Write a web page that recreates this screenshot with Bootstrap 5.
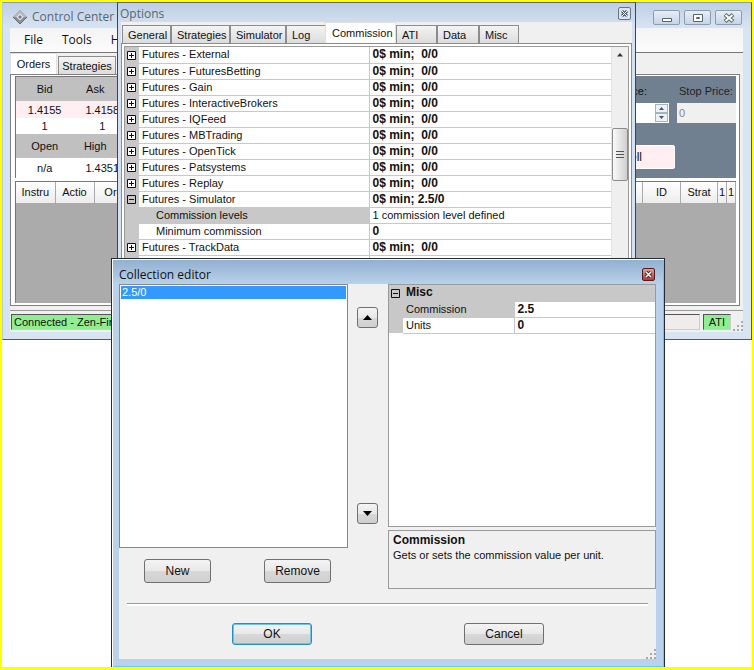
<!DOCTYPE html>
<html lang="en">
<head>
<meta charset="utf-8">
<meta name="viewport" content="width=device-width, initial-scale=1">
<title>Control Center</title>
<link href="https://cdn.jsdelivr.net/npm/bootstrap@5.3.0/dist/css/bootstrap.min.css" rel="stylesheet">
<style>
body{font:11px/16px "Liberation Sans",Arial,sans-serif;color:#111;background:#fff}
button,input{font:inherit;color:inherit}
.desktop{min-height:100vh;border:2px solid #ff0;border-bottom-width:3px}
.win{background:#d7e4f2}
.win-title{font:12px/20px "Open Sans","Noto Sans",sans-serif}
.client{background:#f0f0f0}

/* window placement on the desktop */
.w-main{top:0;left:0;right:0;border:1px solid #4a5a6c;border-left-color:#b9cbe0;border-top-color:#8a9db2}
.w-opt{top:0;left:115px;right:116px;height:300px;border:1px solid #444;border-top-color:#667;background:#d3e1f0}
.w-edit{top:256px;left:109px;right:87px;border:1px solid #222c36;background:#b9d1ea;box-shadow:inset 1px 1px #fff,inset -1px -1px #62cfe8}

/* main window */
.w-main .win-title{height:25px;padding:4px 9px 0 9px;color:#5a6674;background:linear-gradient(#bfd0e4,#d7e4f2)}
.w-main .client{margin:0 8px 7px 7px}
.cap{width:27px;height:15px;border:1px solid #8e9cae;border-radius:2px;background:linear-gradient(#e6eef7,#c6d5e6)}
.caps{padding-top:3px}
.menu{height:25px;background:linear-gradient(#f4f4f4,#fbfbfb);border-bottom:1px solid #777;padding:0 14px;gap:19px}
.menu a{font:12px/23px "Open Sans","Noto Sans",sans-serif;color:#111}
.tabs{border:0;gap:1px}
.tabs .nav-link{border:1px solid #8c8c8c;border-bottom:0;border-radius:0;color:#111;padding:1px 0 0 5px;height:18px;line-height:16px;text-align:left;background:linear-gradient(#f4f4f4,#dcdcdc);margin:0}
.tabs .nav-link.active{background:#fff;color:#111;height:21px;line-height:17px}
.tabs.m .nav-link{text-align:center;padding:1px 0 0}
.t47{width:47px}.t58{width:58px}.t49{width:49px}.t59{width:59px}.t56{width:56px}.t40{width:40px}.t71{width:71px}.t41{width:41px}.t42{width:42px}
.pane{border:1px solid #808080;background:#fff;margin:0 3px 0 0;padding:1px 3px 2px 4px}
.quotes{width:174px;table-layout:fixed;border-left:1px solid #777;border-top:1px solid #777}
.quotes th,.quotes td{text-align:center;padding:0;font-weight:400}
.quotes th{height:24px;background:#c0c0c0}
.quotes th:nth-child(2){padding-right:14px}
.quotes td{height:16px}
.quotes .pink td{background:#ffeef2;padding-top:1px}
.quotes .tall td{height:20px}
.entry{background:#708090;padding-top:5px}
.entry label{line-height:20px;display:block;padding-bottom:2px}
.entry input{border:0;height:20px;padding:0 2px;border-radius:0;min-width:0}
.f-lim{width:86px}.f-lim label{text-align:right;padding-right:22px}
.f-stop{width:59px;color:#222}
.f-stop label{padding-left:2px}
.f-stop input{background:#f0f0f0;color:#888}
.spin{width:14px;padding:1px 1px 1px 0;background:#fff}
.spin button{border:1px solid #a5b3c5;background:#eef1f6;width:13px;height:9px;padding:0;line-height:0}
.sell{width:86px;height:24px;border:1px solid #fff;border-radius:2px;background:#ffeef2;margin:22px 61px 0 0;font-size:12px}
.orders{border-top:1px solid #777;border-left:1px solid #777;margin-top:3px;background:#ababab;height:122px}
.orders table{width:100%;table-layout:fixed}
.orders th{height:21px;font-weight:400;text-align:center;padding:0;background:linear-gradient(#fff,#ececec);border-right:1px solid #aaa;white-space:nowrap;overflow:hidden}
.status{margin-top:4px;border-top:1px solid #999;padding:3px 0 1px 1px;height:22px}
.status span{height:16px;line-height:15px;border:1px solid #555;border-right-color:#ccc;border-bottom-color:#ccc;white-space:nowrap}
.green{background:#90ee90}
.conn{width:320px;padding-left:2px}.idle{background:#f0ecec;margin-right:3px}.ati{width:28px;text-align:center;margin-right:2px}

/* options window */
.w-opt .win-title{height:19px;padding:2px 4px 0 2px;line-height:18px;color:#5a6674;background:linear-gradient(#bdcfe3,#cfdeed)}
.xbtn{width:13px;height:13px;border:1px solid #66748a;border-radius:2px;background:#dbe5f1;padding:0;line-height:0;margin-top:2px}
.w-opt .client{margin:0 3px;height:278px}
.w-opt .tabs{padding-left:1px;gap:0}
.w-opt .tabs .nav-link.active{margin-left:-1px;padding-left:6px}
.o-pane{border:1px solid #8c8c8c;background:#fff;padding:2px}
.pg{width:100%;table-layout:fixed;background:#fff}
.pg th,.pg td{height:16px;line-height:15px;padding:0 0 0 3px;border-bottom:1px solid #c8c8c8;font-weight:400;white-space:nowrap;overflow:hidden}
.pg th{border-right:1px solid #c8c8c8}
.pg td{font-weight:700;font-size:12px}
.pg td.n{font-weight:400;font-size:11px}
.pg .g{background:#c8c8c8;border:0;padding:0 0 0 2px;line-height:0;overflow:visible}
.pg .sub{padding-left:17px}
.pg .on{background:#c8c8c8}
.exp{border:0;background:none;padding:0;line-height:0;display:block}
.frame{border:1px solid #9a9a9a;border-bottom:0}
.sb{width:17px;background:#efefef;border-left:1px solid #e4e4e4}
.thumb{height:53px;margin-top:65px;border:1px solid #8b8b8b;border-radius:2px;background:linear-gradient(90deg,#fafafa,#cfcfcf)}

/* collection editor */
.w-edit .win-title{height:24px;margin:1px 1px 0;padding:5px 8px 0 6px;line-height:20px;color:#111;background:linear-gradient(#92b0d1,#b9d1ea)}
.xred{background:linear-gradient(#dba0a0,#a83c3c);border-color:#5c1a1a;margin-top:3px}
.w-edit .client{margin:0 8px 8px 7px}
.listbox{width:229px;border:1px solid #828790;border-radius:0;height:264px;background:#fff;padding:1px}
.listbox .list-group-item{border:0;border-radius:0;padding:0 1px;line-height:13px;text-align:left}
.listbox .active{background:#39f;color:#fff}
.movers{width:40px;height:264px;padding:23px 1px 24px 0}
.wbtn{border:1px solid #707070;border-radius:3px;background:linear-gradient(#f4f4f4,#e8e8e8 50%,#d8d8d8 51%,#cfcfcf);padding:0;height:24px;color:#111;line-height:20px;font-size:12px}
.wbtn:hover{color:#111}
.sq{width:21px;height:21px;line-height:0}
.b67{width:67px}.b80{width:80px;height:22px}
.def{border-color:#2a8dbb;box-shadow:inset 0 0 0 1px #6cc5e8}
.props{border:1px solid #9a9a9a;background:#fff;height:243px}
.hint{border:1px solid #9a9a9a;margin-top:3px;height:59px;padding:2px 4px;line-height:15px}
.hint b{font-size:12px}
.rule{border-top:1px solid #999;border-bottom:2px solid #fff;margin:14px 8px 0}
.left-b{padding:11px 17px 0 25px}
.foot{padding:17px 112px 0 113px}
</style>
</head>
<body>
<svg width="0" height="0" class="position-absolute" aria-hidden="true"><defs>
<g id="plus"><path d="M.5.5h8v8h-8z" fill="#fff" stroke="#111"/><path d="M2 4.500h5M4.500 2v5" stroke="#111"/></g>
<g id="minus"><path d="M.5.5h8v8h-8z" fill="none" stroke="#111"/><path d="M2 4.500h5" stroke="#111"/></g>
<g id="grip" fill="#a8a8a8"><path d="M8 0h2v2h-2zM4 4h2v2h-2zM8 4h2v2h-2zM0 8h2v2h-2zM4 8h2v2h-2zM8 8h2v2h-2z"/></g>
</defs></svg>
<main class="desktop position-relative overflow-hidden">

<section class="win w-main position-absolute" aria-label="Control Center">
  <div class="win-title d-flex justify-content-between align-items-start">
    <div class="d-flex gap-1 align-items-center">
      <svg width="16" height="16" viewBox="0 0 16 16"><path d="M8 1l7 7-7 7-7-7z" fill="#8a8f96"/><path d="M8 1l7 7H1z" fill="#b4b9bf"/><path d="M8 4.500L11.500 8 8 11.500 4.500 8z" fill="#e9edf1"/><path d="M8 6l2 2-2 2-2-2z" fill="#777d85"/><path d="M1 8l7 7 7-7" fill="none" stroke="#666c74"/></svg>
      <span>Control Center</span></div>
    <div class="caps d-flex gap-1">
      <button class="cap p-0 lh-1 d-flex align-items-center justify-content-center" aria-label="Minimize"><svg width="12" height="10"><path d="M1.500 5.500h9v3h-9z" fill="#fff" stroke="#566"/></svg></button>
      <button class="cap p-0 lh-1 d-flex align-items-center justify-content-center" aria-label="Maximize"><svg width="12" height="10"><path d="M1.500 1.500h9v7h-9z" fill="#fff" stroke="#566"/><path d="M4.500 4.500h3v1h-3z" fill="none" stroke="#566"/></svg></button>
      <button class="cap p-0 lh-1 d-flex align-items-center justify-content-center" aria-label="Close"><svg width="12" height="10"><path d="M2 1.500l8 7M10 1.500l-8 7" stroke="#566" stroke-width="4"/><path d="M2.500 2l7 6M9.500 2l-7 6" stroke="#fff" stroke-width="2"/></svg></button>
    </div>
  </div>
  <div class="client">
    <nav class="menu d-flex"><a class="text-decoration-none" href="#">File</a><a class="text-decoration-none" href="#">Tools</a><a class="text-decoration-none" href="#">Help</a></nav>
    <ul class="nav nav-tabs tabs m align-items-end">
      <li><button class="nav-link active t47">Orders</button></li>
      <li><button class="nav-link t58">Strategies</button></li>
      <li><button class="nav-link t58" aria-label="Executions"></button></li>
    </ul>
    <div class="pane">
      <div class="d-flex">
        <table class="quotes">
          <tr><th>Bid</th><th>Ask</th><th></th></tr>
          <tr class="pink"><td>1.4155</td><td>1.4158</td><td></td></tr>
          <tr><td>1</td><td>1</td><td></td></tr>
          <tr><th>Open</th><th>High</th><th></th></tr>
          <tr class="tall"><td>n/a</td><td>1.4351</td><td></td></tr>
        </table>
        <div class="entry flex-fill">
          <div class="d-flex justify-content-end gap-2">
            <div class="f-lim"><label for="lim">Limit Price:</label>
              <div class="d-flex"><input id="lim" class="flex-fill w-50"><div class="spin"><button aria-label="Up" class="d-block"><svg width="7" height="5"><path d="M1 4l2.500-3L6 4z" fill="#456"/></svg></button><button aria-label="Down" class="d-block"><svg width="7" height="5"><path d="M1 1l2.500 3L6 1z" fill="#456"/></svg></button></div></div></div>
            <div class="f-stop"><label for="stp">Stop Price:</label><input id="stp" class="w-100" value="0" readonly></div>
          </div>
          <div class="text-end"><button class="sell">Sell</button></div>
        </div>
      </div>
      <div class="orders">
        <table>
          <colgroup><col style="width:39px"><col style="width:39px"><col style="width:39px"><col><col style="width:38px"><col style="width:37px"><col style="width:9px"><col style="width:9px"></colgroup>
          <tr><th>Instru</th><th>Actio</th><th>Ord</th><th></th><th>ID</th><th>Strat</th><th>1</th><th>1</th></tr>
        </table>
      </div>
    </div>
    <div class="status d-flex">
      <span class="green conn">Connected - Zen-Fire</span><span class="idle flex-fill"></span><span class="green ati">ATI</span>
      <svg class="align-self-end" width="10" height="10"><use href="#grip"/></svg>
    </div>
  </div>
</section>

<section class="win w-opt position-absolute" aria-label="Options">
  <div class="win-title d-flex justify-content-between align-items-start"><span>Options</span>
    <button class="xbtn" aria-label="Close"><svg width="9" height="9"><path d="M2 2l5 5M7 2L2 7" stroke="#4d5a6b" stroke-width="3"/><path d="M2 2l5 5M7 2L2 7" stroke="#fff"/></svg></button></div>
  <div class="client">
    <ul class="nav nav-tabs tabs align-items-end">
      <li><button class="nav-link t49">General</button></li>
      <li><button class="nav-link t59">Strategies</button></li>
      <li><button class="nav-link t56">Simulator</button></li>
      <li><button class="nav-link t40">Log</button></li>
      <li><button class="nav-link active t71">Commission</button></li>
      <li><button class="nav-link t41">ATI</button></li>
      <li><button class="nav-link t42">Data</button></li>
      <li><button class="nav-link t40">Misc</button></li>
    </ul>
    <div class="o-pane"><div class="frame d-flex">
      <table class="pg" id="grid"><colgroup><col style="width:14px"><col style="width:230px"><col></colgroup><tbody></tbody></table>
      <div class="sb flex-shrink-0"><svg class="d-block" width="16" height="16"><path d="M5 9.500L8 6l3 3.500z" fill="#333"/></svg>
        <div class="thumb d-flex align-items-center justify-content-center"><svg width="8" height="8"><path d="M0 .5h8M0 3.500h8M0 6.500h8" stroke="#555"/></svg></div></div>
    </div></div>
  </div>
</section>

<section class="win w-edit position-absolute" aria-label="Collection editor">
  <div class="win-title d-flex justify-content-between align-items-start"><span>Collection editor</span>
    <button class="xbtn xred" aria-label="Close"><svg width="9" height="9"><path d="M2 2l5 5M7 2L2 7" stroke="#622" stroke-width="3.500"/><path d="M2 2l5 5M7 2L2 7" stroke="#fff" stroke-width="1.500"/></svg></button></div>
  <div class="client">
    <div class="d-flex align-items-start">
      <div class="flex-shrink-0">
        <div class="listbox list-group" role="listbox"><button class="list-group-item active" role="option" aria-selected="true">2.5/0</button></div>
        <div class="left-b d-flex justify-content-between"><button class="wbtn b67">New</button><button class="wbtn b67">Remove</button></div>
      </div>
      <div class="movers d-flex flex-column flex-shrink-0 align-items-center justify-content-between">
        <button class="wbtn sq" aria-label="Move up"><svg width="11" height="7"><path d="M1 6l4.500-5L10 6z" fill="#000"/></svg></button>
        <button class="wbtn sq" aria-label="Move down"><svg width="11" height="7"><path d="M1 1l4.500 5L10 1z" fill="#000"/></svg></button>
      </div>
      <div class="flex-fill">
        <div class="props">
          <table class="pg"><colgroup><col style="width:14px"><col style="width:111px"><col></colgroup>
            <tr><td class="g"><button class="exp" aria-label="Collapse Misc"><svg width="9" height="9"><use href="#minus"/></svg></button></td><td class="on" colspan="2">Misc</td></tr>
            <tr><td class="g"></td><th class="on">Commission</th><td>2.5</td></tr>
            <tr><td class="g"></td><th>Units</th><td>0</td></tr>
          </table>
        </div>
        <div class="hint"><b>Commission</b><br>Gets or sets the commission value per unit.</div>
      </div>
    </div>
    <div class="rule"></div>
    <div class="foot d-flex justify-content-between"><button class="wbtn b80 def">OK</button><button class="wbtn b80">Cancel</button></div>
    <div class="d-flex justify-content-end pt-1"><svg width="10" height="10"><use href="#grip"/></svg></div>
  </div>
</section>
</main>
<script src="https://cdn.jsdelivr.net/npm/bootstrap@5.3.0/dist/js/bootstrap.bundle.min.js"></script>
<script>
const plain = '0$ min;\u00a0 0/0';
const rows = [
  ['+','External',plain],['+','FuturesBetting',plain],['+','Gain',plain],['+','InteractiveBrokers',plain],
  ['+','IQFeed',plain],['+','MBTrading',plain],['+','OpenTick',plain],['+','Patsystems',plain],['+','Replay',plain],
  ['-','Simulator','0$ min; 2.5/0'],['','Commission levels','1 commission level defined'],['','Minimum commission','0'],
  ['+','TrackData',plain],['','','']
];
document.querySelector('#grid tbody').innerHTML = rows.map(([k,n,v]) =>
  `<tr><td class="g">${k ? `<button class="exp" aria-label="Toggle ${n}"><svg width="9" height="9"><use href="#${k==='+'?'plus':'minus'}"/></svg></button>` : ''}</td>` +
  `<th class="${k||!n?'':'sub'} ${n==='Commission levels'?'on':''}">${k?'Futures - ':''}${n}</th><td class="${v[0]==='1'?'n':''}">${v}</td></tr>`).join('');
</script>
</body>
</html>
